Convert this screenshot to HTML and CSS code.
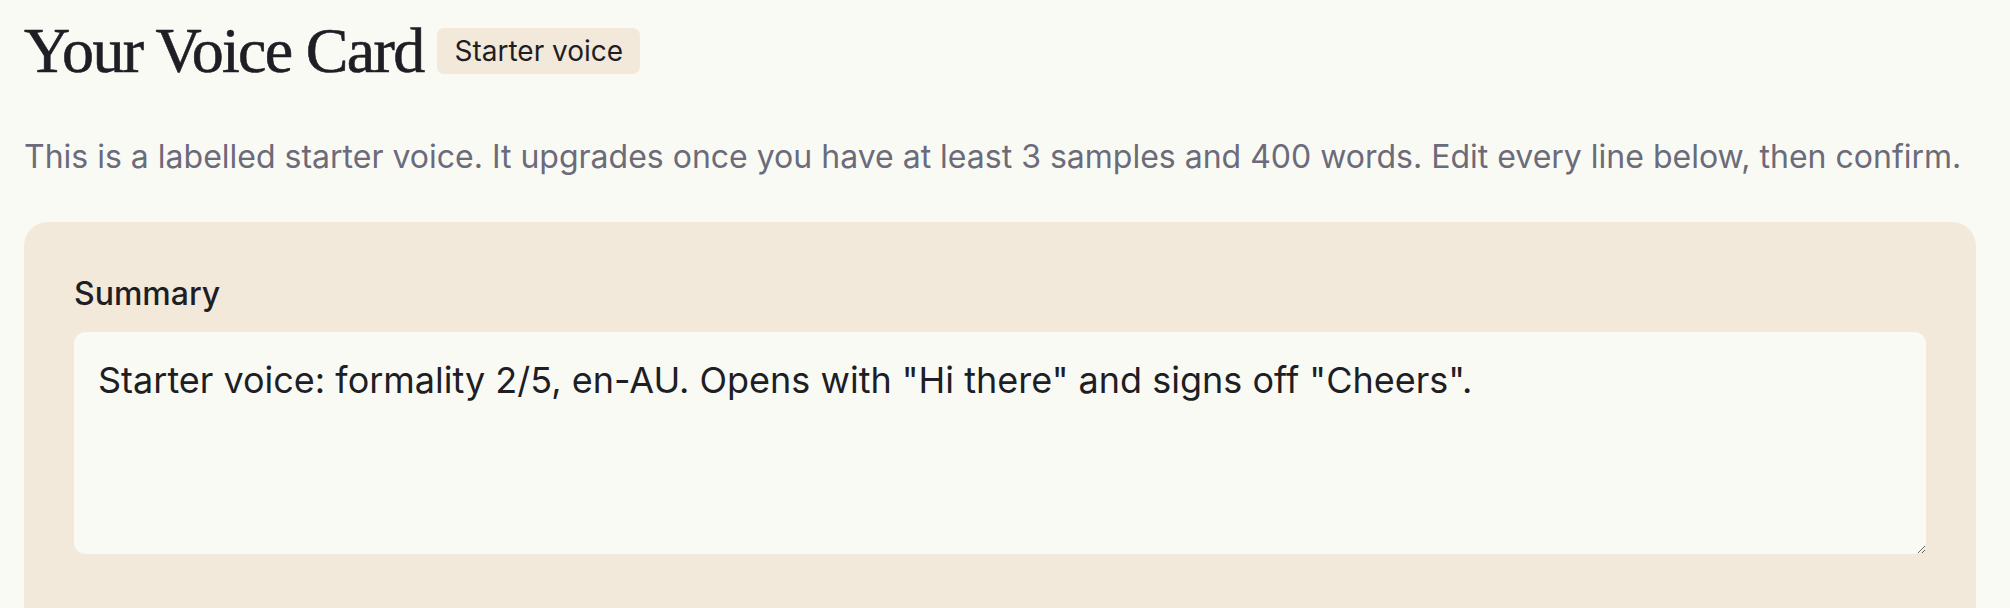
FILE: index.html
```html
<!DOCTYPE html>
<html lang="en">
<head>
<meta charset="utf-8">
<title>Your Voice Card</title>
<link rel="stylesheet" href="styles.css">
</head>
<body>
<main class="page">
  <header class="header">
    <h1 class="title">Your Voice Card</h1>
    <span class="badge">Starter voice</span>
  </header>
  <p class="intro">This is a labelled starter voice. It upgrades once you have at least 3 samples and 400 words. Edit every line below, then confirm.</p>
  <section class="card">
    <label class="field-label" for="summary">Summary</label>
    <textarea id="summary" class="field-input">Starter voice: formality 2/5, en-AU. Opens with "Hi there" and signs off "Cheers".</textarea>
  </section>
</main>
</body>
</html>
```
FILE: styles.css
```css
html, body {
  margin: 0;
  padding: 0;
  background: #fafaf5;
}
body {
  font-family: "Inter", "Liberation Sans", sans-serif;
  color: #1e1e25;
}
.page {
  padding: 13px 34px 0 24px;
}
.header {
  display: flex;
  align-items: center;
  gap: 14px;
}
.title {
  margin: 0;
  font-family: "Liberation Serif", serif;
  font-weight: 400;
  font-size: 64px;
  line-height: 1.2;
  letter-spacing: -1.7px;
  color: #1e1e25;
  -webkit-text-stroke: 0.6px #1e1e25;
}
.badge {
  background: #f3e9da;
  border-radius: 7px;
  padding: 6px 17px;
  font-size: 28px;
  line-height: 34px;
  color: #1e1e25;
}
.intro {
  margin: 43px 0 41px;
  font-size: 32px;
  line-height: 48px;
  color: #6b6b7a;
}
.card {
  background: #f3e9da;
  border-radius: 24px;
  padding: 48px 50px 60px;
  height: 400px;
}
.field-label {
  display: block;
  font-size: 32px;
  font-weight: 500;
  line-height: 48px;
  margin-bottom: 14px;
  color: #1e1e25;
}
.field-input {
  display: block;
  box-sizing: border-box;
  width: 100%;
  height: 222px;
  border: none;
  border-radius: 12px;
  background: #fafaf5;
  padding: 21px 24px;
  font-family: "Inter", "Liberation Sans", sans-serif;
  font-size: 36px;
  line-height: 54px;
  color: #1e1e25;
  outline: none;
}
```
